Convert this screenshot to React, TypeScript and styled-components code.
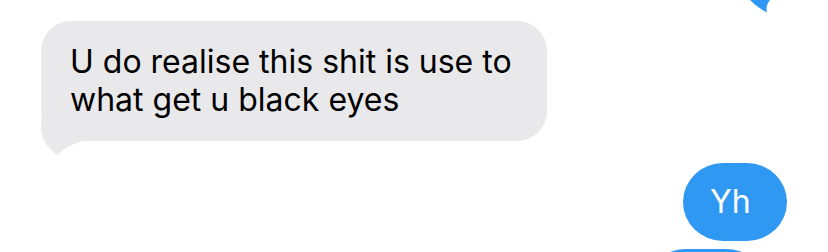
import styled, { createGlobalStyle } from "styled-components";

const GlobalStyle = createGlobalStyle`
	html, body {
		margin: 0;
		padding: 0;
		background: #ffffff;
		overflow: hidden;
	}
	body {
		font-family: Inter, "Liberation Sans", Arial, sans-serif;
		-webkit-font-smoothing: antialiased;
	}
`;

type BubbleProps = {
	text?: string;
	tail?: boolean;
};

const ReceivedBubble = (props: BubbleProps) => {
	return (
		<StyledReceived>
			{props.text}
			{props.tail && (
				<ReceivedTail width="50" height="38" viewBox="0 0 50 38">
					<path d="M0 0 L0 8 Q0 24 16 36 L17 36 Q22 28 42 22 L50 22 L50 0 Z" fill="#e9e9eb" />
				</ReceivedTail>
			)}
		</StyledReceived>
	);
};

export default function App() {
	return (
		<>
			<GlobalStyle />
			<Thread>
				<Row $side="right">
					<PrevTail width="22" height="13" viewBox="0 0 22 13">
						<path d="M0 0 Q8 8 17 12.5 Q15 6 20 0 Z" fill="#2f98f3" />
					</PrevTail>
				</Row>
				<Row $side="left" $top={8}>
					<ReceivedBubble text="U do realise this shit is use to what get u black eyes" tail />
				</Row>
				<Row $side="right" $top={22}>
					<SentBubble>Yh</SentBubble>
				</Row>
				<Row $side="right" $top={8}>
					<NextBubble />
				</Row>
			</Thread>
		</>
	);
}

const Thread = styled.div`
	display: flex;
	flex-direction: column;
	width: 828px;
	height: 252px;
	overflow: hidden;
`;

const Row = styled.div<{ $side: "left" | "right"; $top?: number }>`
	display: flex;
	justify-content: ${(p) => (p.$side === "left" ? "flex-start" : "flex-end")};
	margin-top: ${(p) => p.$top ?? 0}px;
	padding: 0 41px;
	flex-shrink: 0;
`;

const PrevTail = styled.svg`
	display: block;
	margin-right: 15px;
`;

const StyledReceived = styled.div`
	position: relative;
	box-sizing: border-box;
	width: 506px;
	padding: 22px 20px 22px 29px;
	background: #e9e9eb;
	border-radius: 30px;
	color: #000;
	font-size: 32px;
	line-height: 38px;
`;

const ReceivedTail = styled.svg`
	position: absolute;
	left: 0;
	top: 98px;
	display: block;
`;

const SentBubble = styled.div`
	box-sizing: border-box;
	width: 104px;
	height: 78px;
	padding: 20px 0 20px 27px;
	background: #2f98f3;
	border-radius: 40px / 39px;
	color: #fff;
	font-size: 32px;
	line-height: 38px;
`;

const NextBubble = styled.div`
	width: 112px;
	height: 60px;
	margin-right: 25px;
	background: #2f98f3;
	border-radius: 36px / 30px;
`;
